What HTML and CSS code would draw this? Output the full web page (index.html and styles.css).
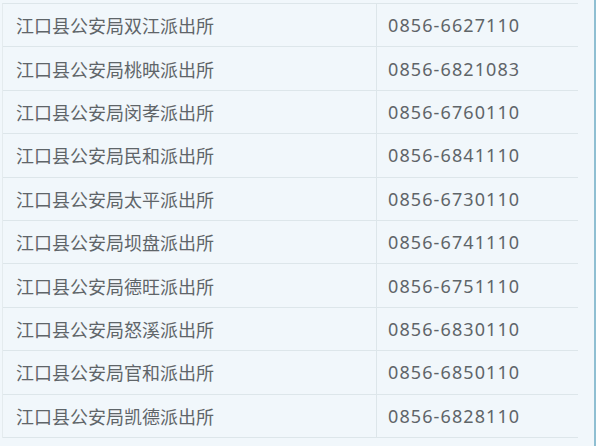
FILE: index.html
```html
<!DOCTYPE html>
<html lang="zh-CN">
<head>
  <meta charset="UTF-8">
  <meta name="viewport" content="width=device-width, initial-scale=1.0">
  <title>江口县公安局派出所电话</title>
  <link rel="stylesheet" href="styles.css">
</head>
<body>
  <div class="panel">
    <div class="list">
      <div class="row"><div class="name">江口县公安局双江派出所</div><div class="phone">0856-6627110</div></div>
      <div class="row"><div class="name">江口县公安局桃映派出所</div><div class="phone">0856-6821083</div></div>
      <div class="row"><div class="name">江口县公安局闵孝派出所</div><div class="phone">0856-6760110</div></div>
      <div class="row"><div class="name">江口县公安局民和派出所</div><div class="phone">0856-6841110</div></div>
      <div class="row"><div class="name">江口县公安局太平派出所</div><div class="phone">0856-6730110</div></div>
      <div class="row"><div class="name">江口县公安局坝盘派出所</div><div class="phone">0856-6741110</div></div>
      <div class="row"><div class="name">江口县公安局德旺派出所</div><div class="phone">0856-6751110</div></div>
      <div class="row"><div class="name">江口县公安局怒溪派出所</div><div class="phone">0856-6830110</div></div>
      <div class="row"><div class="name">江口县公安局官和派出所</div><div class="phone">0856-6850110</div></div>
      <div class="row"><div class="name">江口县公安局凯德派出所</div><div class="phone">0856-6828110</div></div>
    </div>
  </div>
</body>
</html>
```

FILE: styles.css
```css
* {
  margin: 0;
  padding: 0;
  box-sizing: border-box;
}

body {
  font-family: "Noto Sans", "Noto Sans CJK SC", sans-serif;
  background-color: #ffffff;
  color: #5f6569;
  width: 600px;
  height: 446px;
  overflow: hidden;
}

.panel {
  width: 596px;
  height: 446px;
  background-color: #f1f7fb;
  border-right: 2px solid #8fbfd2;
  padding-top: 3px;
}

.list {
  margin-left: 2px;
  width: 576px;
  border-top: 1px solid #dde6ea;
  border-left: 1px solid #e4ebee;
}

.row {
  display: grid;
  grid-template-columns: 374px 1fr;
  height: 43.4px;
  border-bottom: 1px solid #dde6ea;
  align-items: center;
}

.name {
  font-family: "Noto Sans CJK SC", sans-serif;
  font-size: 18px;
  padding-left: 13px;
  height: 100%;
  display: flex;
  align-items: center;
  border-right: 1px solid #dde6ea;
}

.phone {
  font-size: 18px;
  letter-spacing: 1.1px;
  padding-left: 11px;
}
```
